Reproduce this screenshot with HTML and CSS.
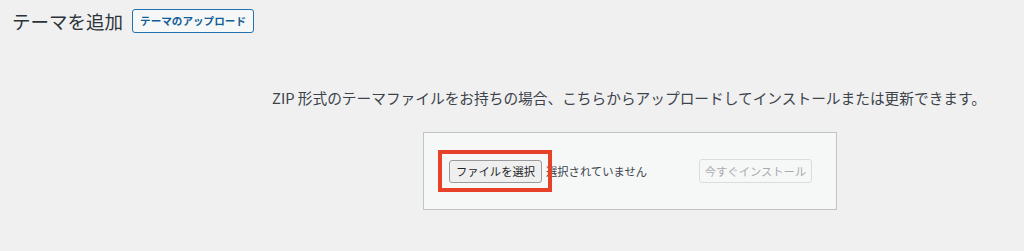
FILE: index.html
```html
<!DOCTYPE html>
<html lang="ja">

<head>
    <meta charset="UTF-8">
    <meta name="viewport" content="width=device-width, initial-scale=1.0">
    <title>テーマを追加</title>
    <link rel="stylesheet" href="styles.css">
</head>

<body>
    <div class="wrap">
        <div class="page_head">
            <h1 class="page_title">テーマを追加</h1>
            <button class="title_btn" type="button">テーマのアップロード</button>
        </div>

        <div class="upload_wrap">
            <p class="install_help">ZIP 形式のテーマファイルをお持ちの場合、こちらからアップロードしてインストールまたは更新できます。</p>
            <div class="upload_box">
                <button class="file_btn" type="button">ファイルを選択</button>
                <span class="file_name">選択されていません</span>
                <button class="install_btn" type="button" disabled>今すぐインストール</button>
                <!-- annotation frame -->
                <div class="mark"></div>
            </div>
        </div>
    </div>
</body>

</html>
```

FILE: styles.css
```css
body {
    margin: 0;
    background-color: #f0f0f1;
    font-family: "Noto Sans CJK JP", "Noto Sans", sans-serif;
    color: #3c434a;
}

.wrap {
    width: 1024px;
    height: 251px;
    overflow: hidden;
}

.page_head {
    display: flex;
    align-items: center;
    height: 42px;
    padding-left: 12px;
}

.page_title {
    margin: 0;
    font-size: 18.5px;
    font-weight: 400;
    color: #2c3338;
    line-height: 24px;
}

.title_btn {
    margin-left: 9px;
    height: 24px;
    width: 122px;
    padding: 0;
    border: 1px solid #2271b1;
    border-radius: 3px;
    background-color: #f6f7f7;
    color: #135e96;
    font-family: inherit;
    font-size: 10.6px;
    font-weight: 700;
    line-height: 20px;
}

.upload_wrap {
    display: flex;
    flex-direction: column;
    align-items: center;
    padding-left: 234px;
    padding-top: 46px;
}

.install_help {
    margin: 0;
    font-size: 14.7px;
    line-height: 20px;
    white-space: nowrap;
}

.upload_box {
    position: relative;
    display: flex;
    align-items: center;
    box-sizing: border-box;
    width: 414px;
    height: 78px;
    margin-top: 24px;
    margin-left: 2px;
    padding: 0 24px 0 25px;
    background-color: #f6f7f7;
    border: 1px solid #c3c4c7;
}

.file_btn {
    height: 23px;
    width: 93px;
    padding: 0;
    border: 1px solid #9a9a9a;
    border-radius: 3px;
    background-color: #efefef;
    color: #1d2327;
    font-family: inherit;
    font-size: 11.3px;
    line-height: 20px;
}

.file_name {
    margin-left: 4px;
    font-size: 11.3px;
    color: #3c434a;
}

.install_btn {
    margin-left: auto;
    height: 24px;
    width: 113px;
    padding: 0;
    border: 1px solid #dcdcde;
    border-radius: 3px;
    background-color: #f6f7f7;
    color: #a7aaad;
    font-family: inherit;
    font-size: 11.3px;
    line-height: 20px;
}

.mark {
    position: absolute;
    left: 14px;
    top: 17px;
    width: 114px;
    height: 42px;
    box-sizing: border-box;
    border: 4px solid #e8412a;
}
```
